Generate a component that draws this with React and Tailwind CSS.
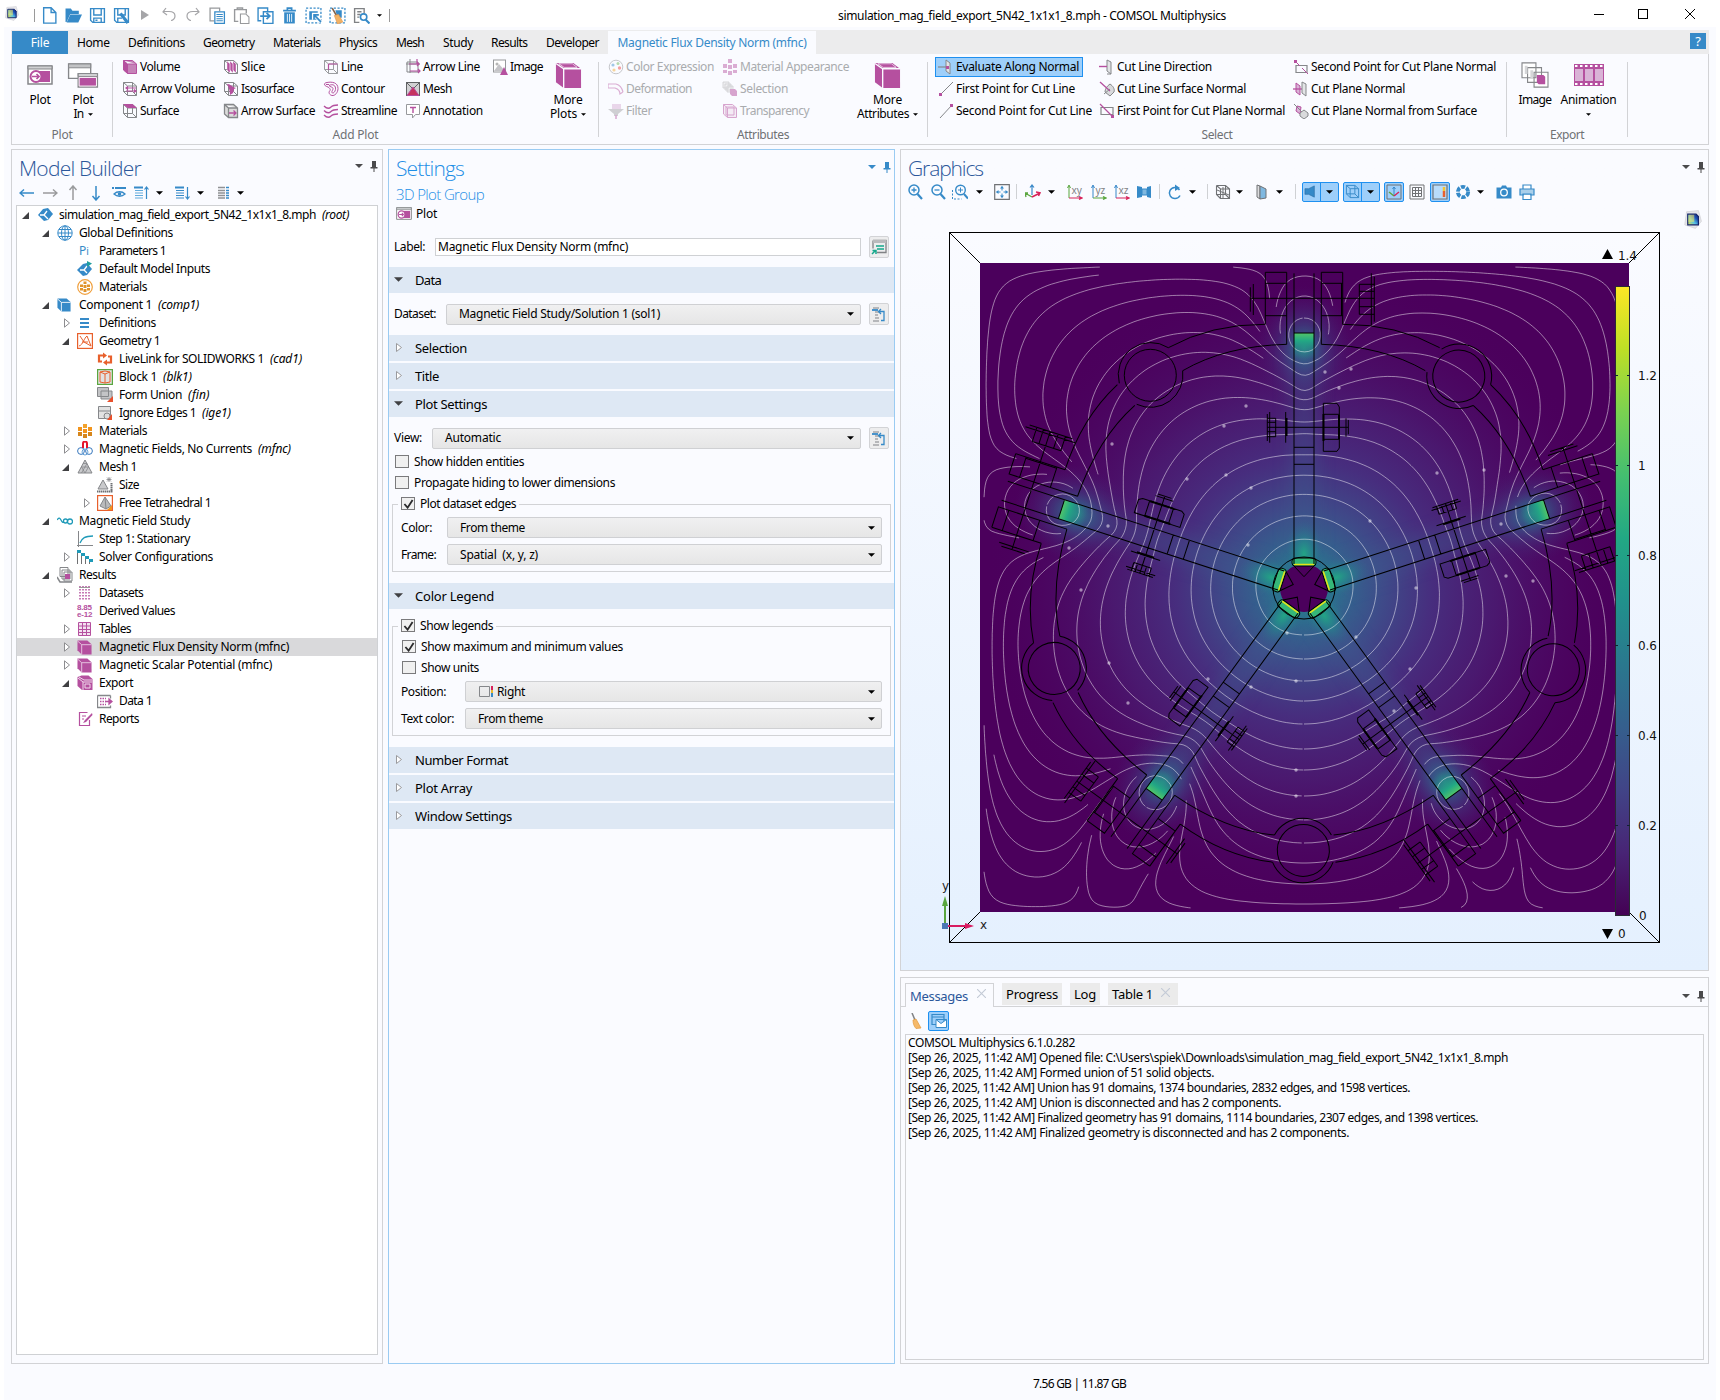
import React, { useLayoutEffect, useMemo, useRef } from "react";

const B = "#368ac8";
const P = "#b5509f";
const G = "#85878a";
const L = "#d9b3d6";

/* Text whose letter spacing is tuned so the run occupies `w` pixels. */
function T({ w, className = "", children }) {
  const ref = useRef(null);
  useLayoutEffect(() => {
    const el = ref.current;
    if (!w || !el) return;
    el.style.letterSpacing = "0px";
    const n = String(children).length;
    el.style.letterSpacing = (w - el.getBoundingClientRect().width) / n + "px";
  }, [w, children]);
  return (
    <span ref={ref} className={"inline-block whitespace-pre " + className}>
      {children}
    </span>
  );
}

function Svg({ s = "size-4", vb = "0 0 16 16", children, className = "" }) {
  return (
    <svg viewBox={vb} className={"shrink-0 " + s + " " + className} fill="none" stroke="none">
      {children}
    </svg>
  );
}

const Caret = ({ className = "fill-black", s = "w-[7px] h-[4px]" }) => (
  <svg viewBox="0 0 8 4" className={"shrink-0 " + s + " " + className}>
    <path d="M0 0h8L4 4z" />
  </svg>
);

const Logo = ({ s = "size-4" }) => (
  <Svg s={s}>
    <path d="M3 1.500l10-1 2.500 9-5 6-9-3z" fill="#e6e6ea" stroke="#cfcfd4" strokeWidth=".6" />
    <defs>
      <linearGradient id="lg" x1="0" y1="1" x2="1" y2="0">
        <stop offset="0" stopColor="#f5e63a" />
        <stop offset=".4" stopColor="#58c4e8" />
        <stop offset=".7" stopColor="#1d4fb5" />
        <stop offset="1" stopColor="#10256e" />
      </linearGradient>
    </defs>
    <path d="M4 3.500h7l2 2v7H4z" fill="url(#lg)" stroke="#14246b" strokeWidth="1" />
    <path d="M4.500 4h5v6h-5z" fill="#ffe95a" opacity=".55" />
  </Svg>
);

const cubeEdges = "M1.500 1.500h9l4 3.500v9.500h-9l-4-3.500zM1.500 1.500l4 3.500h9M5.500 5v9.500";
const wire = "M1.500 1.500h9l4 3.500M1.500 1.500v9l4 4M1.500 1.500l4 3.500h9v9.500h-9V5M10.500 1.500v9h-9M10.500 10.500l4 4";

const Cube = ({ c = P, edge = "#fafbff", s }) => (
  <Svg s={s}>
    <path d="M.500 .500h10.500l4.500 4V15.500H5L.500 11z" fill={c} />
    <path d="M.500 1l4.500 4h10.500M5 5v10.500" stroke={edge} strokeWidth="1" />
  </Svg>
);

/* ---------- icon set ---------- */
const icons = {
  volume: (
    <Svg>
      <path d={cubeEdges} fill="#c583b8" stroke={P} />
      <path d="M1.500 1.500l4 3.500v9.500l-4-3.500z" fill={P} />
    </Svg>
  ),
  arrowVolume: (
    <Svg>
      <path d={wire} stroke={G} />
      <path d="M4 7h10M4 10h10M6 5.500L4 7l2 1.500M12 8.500l2 1.500-2 1.500" stroke={P} strokeWidth="1.200" />
    </Svg>
  ),
  surface: (
    <Svg>
      <path d={wire} stroke={G} />
      <path d="M1 1h9.500l4.500 4H5.500z" fill={P} />
    </Svg>
  ),
  slice: (
    <Svg>
      <path d={wire} stroke={G} />
      <path d="M4 2l3 3v9l-3-3zM7 2l3 3v9l-3-3zM10 2l3 3v9l-3-3z" fill={P} stroke="#fff" strokeWidth=".4" />
    </Svg>
  ),
  iso: (
    <Svg>
      <path d={wire} stroke={G} />
      <path d="M4 3c3 0 5 2 6 3l3 1-2 1-1 4-3 2c0-4-1-7-3-11z" fill={P} />
    </Svg>
  ),
  arrowSurface: (
    <Svg>
      <path d={cubeEdges} stroke={G} strokeWidth="1.300" fill="#dcdcdc" />
      <path d="M6 10h7M10.500 7.500L13 10l-2.500 2.500" stroke={P} strokeWidth="1.300" />
    </Svg>
  ),
  line: (
    <Svg>
      <path d={wire} stroke="#9b9da0" />
      <path d="M5.500 5h9M5.500 5v6" stroke={P} strokeWidth="1.200" />
    </Svg>
  ),
  contour: (
    <Svg>
      <path d="M5 6C1 5 0 2 4 1.500c5-1 11 0 11 6 0 4-3 7.500-6 7-2.500-.500-4-3-2-5 1-1-1-3-2-3.500z" stroke={P} />
      <path d="M6 4.500c4-2 7 0 6.500 4-.500 3-3 4.500-3.500 3-.500-1.500 1-2 1-4C10 6 7 6 6 4.500zM3 3.500h3" stroke={P} />
    </Svg>
  ),
  stream: (
    <Svg>
      <path d="M1 3c3 3 5 3 7 1s4-2 7-2M1 7.500c3 3 5 3 7 1s4-2 7-2M1 12c3 3 5 3 7 1s4-2 7-2" stroke={P} strokeWidth="1.300" />
    </Svg>
  ),
  arrowLine: (
    <Svg>
      <path d="M2 3h11v10H2zM5 0v14M1 5h14" stroke={G} />
      <path d="M4 5h10M12 3l2 2-2 2M5 12h10M13 10l2 2-2 2M12 0v5" stroke={P} strokeWidth="1.200" />
    </Svg>
  ),
  mesh: (
    <Svg>
      <rect x="1.500" y="1.500" width="13" height="13" fill="#d0d0d2" stroke="#606264" />
      <path d="M2 2l6 6 6-6" stroke="#606264" />
      <path d="M8 6l6 8.500H2z" fill="#c5325f" stroke={P} />
    </Svg>
  ),
  annotation: (
    <Svg>
      <path d="M1.500 1.500h13v10h-4l-3 3.500v-3.500h-6z" stroke="#97999c" fill="#fff" />
      <path d="M5 4.500h6M8 4.500V10" stroke={P} strokeWidth="1.400" />
    </Svg>
  ),
  image: (
    <Svg>
      <rect x="1.500" y="1" width="12" height="12" stroke="#97999c" fill="#fff" />
      <circle cx="5" cy="5" r="1.500" fill="#b5b5b5" />
      <path d="M2 12l5-7 6 7z" fill="#c4c4c8" />
      <path d="M12 8l4 8H8z" fill={P} />
    </Svg>
  ),
  palette: (
    <Svg className="opacity-45">
      <circle cx="8" cy="8" r="6.800" stroke={G} />
      <circle cx="5" cy="6" r="1.600" fill={B} />
      <circle cx="10" cy="4.500" r="1.500" fill="#62b04b" />
      <circle cx="11.500" cy="9" r="1.700" fill="#e33" />
      <circle cx="6" cy="11" r="1.600" fill="#f5a623" />
    </Svg>
  ),
  deform: (
    <Svg className="opacity-45">
      <path d="M0 3h8c4 1 6 4 7 8M0 7h7c3 1 5 3 5 6l3-2M0 3v4" stroke={P} strokeWidth="1.200" />
    </Svg>
  ),
  filter: (
    <Svg className="opacity-50">
      <path d="M4 1h9v5H4z" fill={L} />
      <path d="M0 6h16l-6 5v2H6v-2z" fill="#a5a5a8" />
      <path d="M8 12v4" stroke={P} strokeWidth="1.500" />
    </Svg>
  ),
  matApp: (
    <Svg className="opacity-45">
      <path d="M6 0h4v4H6zM1 5h4v4H1zM6 6h4v4H6zM11 5h4v4h-4zM1 11h4v3H1zM6 12h4v4H6zM11 11h4v3h-4z" fill={P} />
    </Svg>
  ),
  selection: (
    <Svg className="opacity-50">
      <path d="M1 1h6v6H1zM3 3h6v6H3zM5 5h6v6H5z" fill="#e6e6e6" stroke="#a2a2a5" strokeWidth=".8" />
      <path d="M8 8h5l2 2v5h-5l-2-2z" fill={P} />
    </Svg>
  ),
  transp: (
    <Svg className="opacity-50">
      <path d={cubeEdges} stroke={P} fill="#efdcec" />
      <path d="M4 4h8v8H4z" stroke={P} />
    </Svg>
  ),
  evalNormal: (
    <Svg>
      <path d="M8 1l4 3v11l-4-3z" fill="#e2e4e6" stroke={G} />
      <path d="M0 8h9" stroke={G} strokeWidth="1.200" />
      <path d="M8 7h3v3H8z" fill={P} />
    </Svg>
  ),
  firstLine: (
    <Svg>
      <path d="M2 14L15 1" stroke={G} />
      <path d="M1 12h3v3H1z" fill={P} />
    </Svg>
  ),
  secondLine: (
    <Svg>
      <path d="M2 15L14 2" stroke={G} />
      <path d="M12 1h3v3h-3z" fill={P} />
    </Svg>
  ),
  lineDir: (
    <Svg>
      <path d="M8 1l4 2v12l-4-3z" fill="#e2e4e6" stroke={G} />
      <path d="M0 7.500h8" stroke={P} strokeWidth="1.400" />
      <path d="M8 15h4" stroke={G} />
    </Svg>
  ),
  lineSurf: (
    <Svg>
      <path d="M11 3c3 2 5 5 4 8l-4 4-5-4c0-3 2-6 5-8z" fill="#d9dadc" stroke={G} />
      <path d="M1 1l10 9" stroke={P} strokeWidth="1.300" />
      <path d="M5 13l6-5" stroke={G} />
    </Svg>
  ),
  planeFirst: (
    <Svg>
      <path d="M2 4.500h12v7H2z" stroke={G} strokeWidth="1.200" />
      <path d="M1 1l12 12" stroke={P} strokeWidth="1.200" />
      <path d="M12 12h3v3h-3z" fill={P} />
    </Svg>
  ),
  planeSecond: (
    <Svg>
      <path d="M3 6.500h11v7H3z" stroke={G} strokeWidth="1.200" />
      <path d="M2 2l5 5M9 9l6 6" stroke={P} strokeWidth="1" />
      <path d="M1 1h3v3H1z" fill={P} />
    </Svg>
  ),
  planeNormal: (
    <Svg>
      <path d="M3 2l4 3v9l-4-3z" fill={L} stroke={P} />
      <path d="M0 8h10" stroke={P} strokeWidth="1.300" />
      <path d="M9 1l4 2v12l-4-3z" fill="#e2e4e6" stroke={G} />
    </Svg>
  ),
  planeSurf: (
    <Svg>
      <path d="M4 3l4 1-1 7-4-3z" fill={L} stroke={P} />
      <path d="M1 1l10 10" stroke={G} />
      <path d="M11 7l4 3v3l-4 3-4-3v-3z" fill="#d9dadc" stroke={G} />
    </Svg>
  ),
};

/* ---------- title bar ---------- */
const qa = [
  <Svg key="n" s="size-[17px]"><path d="M2.500 .700h7l4.500 4.500v10H2.500zM9.500 .700v4.500H14" stroke={B} strokeWidth="1.300" fill="#fff" /></Svg>,
  <Svg key="o" s="size-[17px]"><path d="M.500 1.500h5l1.500 2h6v3H5L1.500 14h-1z" fill={B} /><path d="M5 7h11l-3.500 7.500H1.500z" fill={B} /></Svg>,
  <Svg key="s" s="size-[17px]"><path d="M1.500 1.500h13v13h-11l-2-2zM4.500 1.500v6h7v-6M4.500 14.500v-4h7v4M6 12.500h2" stroke={B} strokeWidth="1.300" /></Svg>,
  <Svg key="sa" s="size-[17px]"><path d="M1.500 1.500h13v13h-11l-2-2zM4.500 1.500v6h7v-6M4.500 14.500v-4h4" stroke={B} strokeWidth="1.300" /><path d="M7 6l7 9" stroke={B} strokeWidth="3" /></Svg>,
  <Svg key="p"><path d="M4 3l8 5-8 5z" fill="#a5a5a8" /></Svg>,
  <Svg key="u"><path d="M5 1L2 5l4 3M2 4.500h6c4 0 6 2 6 4.500s-2 4.500-4 4.500" stroke="#a5a5a8" strokeWidth="1.200" /></Svg>,
  <Svg key="r"><path d="M11 1l3 4-4 3M14 4.500H8c-4 0-6 2-6 4.500s2 4.500 4 4.500" stroke="#a5a5a8" strokeWidth="1.200" /></Svg>,
  <Svg key="c" s="size-[17px]"><path d="M5 13H1V1h9v3" stroke="#97999c" strokeWidth="1.200" /><path d="M5.500 4.500h9v11h-9z" stroke={B} strokeWidth="1.200" fill="#fff" /><path d="M7 7h6M7 9h6M7 11h6M7 13h6" stroke={B} /></Svg>,
  <Svg key="pa" s="size-[17px]"><path d="M5 13.500H1.500v-11h11V6M4 3V1h5v2" stroke="#97999c" strokeWidth="1.300" /><path d="M7 6.500h5l3 3v6H7z" stroke="#97999c" fill="#fff" /></Svg>,
  <Svg key="d" s="size-[17px]"><path d="M4 13H1V1h9v3M6 4.500h9v11H6z" stroke={B} strokeWidth="1.300" /><path d="M3 8.500h9M9 5.500l3 3-3 3" stroke={B} strokeWidth="1.700" /></Svg>,
  <Svg key="t" s="size-[17px]"><path d="M2 3.500h12M6 2.500V1h4v1.500" stroke={B} strokeWidth="1.600" /><path d="M3 5h10v10.500H3z" fill={B} /><path d="M6 6.500v7.500M8 6.500v7.500M10 6.500v7.500" stroke="#fff" strokeWidth=".8" /></Svg>,
  <Svg key="se" s="size-[17px]"><path d="M1 1h14v14H1z" stroke={B} strokeWidth="1.200" strokeDasharray="2 1.500" /><path d="M4 4h8v8H4z" fill={B} /><path d="M8 7l7 7M8 12V7h5" stroke="#fff" strokeWidth="3" /><path d="M8.500 7.500L15 14M8.500 12V7.500H13" stroke={B} strokeWidth="1.600" /></Svg>,
  <Svg key="cl" s="size-[17px]"><path d="M1 1h14v14H1z" stroke={B} strokeWidth="1.200" strokeDasharray="2 1.500" /><path d="M6 3h6v7H8z" fill={B} /><path d="M3 1l4 7" stroke="#83614a" strokeWidth="1.500" /><path d="M5 8l4-1 4 7-5 2z" fill="#f2b264" stroke="#e0944a" strokeWidth=".6" /></Svg>,
  <Svg key="f" s="size-[17px]"><path d="M6 14.500H1.500v-13h9V6M4 4.500h4M4 7h3M4 9.500h2" stroke="#808285" strokeWidth="1.300" /><circle cx="10" cy="9.500" r="3" stroke={B} strokeWidth="1.500" /><path d="M12 12l3.500 3.500" stroke={B} strokeWidth="2" /></Svg>,
];

function TitleBar() {
  return (
    <div className="flex h-[27px] shrink-0 items-center bg-white pt-[3px]">
      <div className="mb-[3px] w-[34px] pl-[4px]"><Logo s="size-[15px]" /></div>
      <div className="h-[13px] w-px bg-[#9a9a9a]" />
      <div className="ml-[2px] flex">
        {qa.map((i, k) => (
          <div key={k} className="flex w-6 items-center justify-center">{i}</div>
        ))}
      </div>
      <Caret s="w-[5px] h-[3px] ml-[4px]" />
      <div className="ml-[7px] h-[13px] w-px bg-[#9a9a9a]" />
      <T w={388} className="ml-[448px] pt-px">simulation_mag_field_export_5N42_1x1x1_8.mph - COMSOL Multiphysics</T>
      <svg viewBox="0 0 104 12" className="mb-[2px] ml-auto mr-[24px] h-3 w-[104px]" stroke="#000" fill="none">
        <path d="M2 6.500h10M46.500 1.500h9v9h-9z" shapeRendering="crispEdges" />
        <path d="M93 1l10 10M103 1L93 11" />
      </svg>
    </div>
  );
}

/* ---------- ribbon ---------- */
const tabs = [
  ["Home", 32.5, "pl-[9px] w-[60px]"],
  ["Definitions", 57, "w-[75px]"],
  ["Geometry", 51.5, "w-[70px]"],
  ["Materials", 47.5, "w-[66px]"],
  ["Physics", 38.5, "w-[57px]"],
  ["Mesh", 28, "w-[47px]"],
  ["Study", 30, "w-[48px]"],
  ["Results", 36.5, "w-[55px]"],
  ["Developer", 53, "w-[62px]"],
];

function TabBar() {
  return (
    <div className="flex h-6 shrink-0 items-center bg-[#ececed]">
      <div className="ml-px flex h-[23px] w-14 items-center justify-center self-end bg-[#368ac8] text-white"><T w={18.5}>File</T></div>
      {tabs.map(([t, w, c]) => (
        <div key={t} className={"pt-[2px] " + c}><T w={w}>{t}</T></div>
      ))}
      <div className="flex h-[23px] w-[208px] items-center justify-center self-end bg-[#fafbff] text-[#368ac8]">
        <T w={189}>Magnetic Flux Density Norm (mfnc)</T>
      </div>
      <div className="ml-auto mr-[3px] mt-[3px] flex size-4 items-center justify-center self-start bg-[#368ac8] text-[13px] text-white">?</div>
    </div>
  );
}

function RCol({ c, items, dim }) {
  return (
    <div className={"flex flex-col gap-[2px] " + c}>
      {items.map(([icon, text, w, on]) => (
        <div
          key={text}
          className={
            "flex h-5 items-center gap-[2px] whitespace-nowrap border pl-[2px] " +
            (on ? "w-[148px] border-[#1e90f0] bg-[#9ecffa]" : "border-transparent") +
            (dim ? " text-[#a9abae]" : "")
          }
        >
          {icons[icon]}
          <T w={w}>{text}</T>
        </div>
      ))}
    </div>
  );
}

function Big({ c, icon, a, wa, b, wb }) {
  return (
    <div className={"flex flex-col items-center " + c}>
      <div className="flex h-9 items-center justify-center">{icon}</div>
      <T w={wa} className="leading-[14px]">{a}</T>
      {b !== undefined && (
        <div className="flex items-center gap-1 leading-[14px]">
          {b && <T w={wb}>{b}</T>}
          <Caret s={b ? "w-[5px] h-[3px]" : "w-[5px] h-[3px] mt-[6px]"} />
        </div>
      )}
    </div>
  );
}

const Group = ({ c, label, lw, children }) => (
  <div className={"flex flex-col " + c}>
    <div className="flex h-[73px] pt-[3px]">{children}</div>
    <div className="text-center leading-[16px] text-[#6f7174]"><T w={lw}>{label}</T></div>
  </div>
);
const Sep = () => <div className="mt-2 h-[75px] w-px shrink-0 bg-[#d2d3d6]" />;

const PlotIcon = ({ s = "size-6" }) => (
  <svg viewBox="0 0 26 20" className={s} preserveAspectRatio="none">
    <path d="M1 1h24v18H1z" fill="#fff" stroke={G} strokeWidth="1.500" />
    <path d="M1 1h24v3H1z" fill="#cfd0d2" stroke={G} />
    <path d="M12 6h11v11H12z" fill={P} />
    <circle cx="9" cy="11.500" r="5.500" fill="#fff" stroke={P} strokeWidth="2" />
    <path d="M5 11.500h7M9.500 9l2.500 2.500L9.500 14" stroke={P} strokeWidth="1.700" fill="none" />
  </svg>
);

const BigCube = () => (
  <svg viewBox="0 0 26 28" className="h-[27px] w-[27px]">
    <path d="M0 1h18l8 6v20H8L0 21z" fill={P} />
    <path d="M0 1.500L8 7h18M8 7v20" stroke="#fafbff" strokeWidth="1.400" fill="none" />
    <path d="M3 1.800h14l5 3.800H8.500z" fill={P} stroke="#fafbff" strokeWidth=".7" />
  </svg>
);

function Ribbon() {
  return (
    <div className="flex h-[91px] shrink-0 border border-t-0 border-[#d2d3d6]">
      <Group c="w-[100px]" label="Plot" lw={21}>
        <Big c="w-[42px] ml-[7px]" icon={<PlotIcon s="w-[26px] h-[20px]" />} a="Plot" wa={21} />
        <Big
          c="w-[44px]"
          a="Plot"
          wa={21}
          b="In"
          wb={10}
          icon={
            <svg viewBox="0 0 32 26" className="h-[25px] w-8">
              <path d="M1 1h23v15H1z" fill="#fff" stroke={G} strokeWidth="1.400" />
              <path d="M1 1h23v4H1z" fill="#c2c3c5" stroke={G} />
              <path d="M11 11h20v14H11z" fill={P} stroke={G} strokeWidth="1.400" />
              <path d="M11 11h20v3H11z" fill="#d5d6d8" stroke={G} />
              <path d="M12 15h18v9H12z" stroke="#fff" fill="none" />
            </svg>
          }
        />
      </Group>
      <Sep />
      <Group c="w-[485px]" label="Add Plot" lw={46}>
        <RCol c="ml-[6px] w-[101px]" items={[["volume", "Volume", 40], ["arrowVolume", "Arrow Volume", 75], ["surface", "Surface", 39]]} />
        <RCol c="w-[100px]" items={[["slice", "Slice", 24], ["iso", "Isosurface", 53], ["arrowSurface", "Arrow Surface", 74]]} />
        <RCol c="w-[82px]" items={[["line", "Line", 22], ["contour", "Contour", 44], ["stream", "Streamline", 56]]} />
        <RCol c="w-[87px]" items={[["arrowLine", "Arrow Line", 57], ["mesh", "Mesh", 29], ["annotation", "Annotation", 60]]} />
        <RCol c="w-[53px]" items={[["image", "Image", 33]]} />
        <Big c="w-[52px]" icon={<BigCube />} a="More" wa={29} b="Plots" wb={27} />
      </Group>
      <Sep />
      <Group c="w-[328px]" label="Attributes" lw={52}>
        <RCol dim c="ml-[6px] w-[114px]" items={[["palette", "Color Expression", 88], ["deform", "Deformation", 66], ["filter", "Filter", 26]]} />
        <RCol dim c="w-[133px]" items={[["matApp", "Material Appearance", 109], ["selection", "Selection", 48], ["transp", "Transparency", 69]]} />
        <Big c="w-[71px]" icon={<BigCube />} a="More" wa={29} b="Attributes" wb={52} />
      </Group>
      <Sep />
      <Group c="w-[578px]" label="Select" lw={31}>
        <RCol c="ml-[7px] w-[161px]" items={[["evalNormal", "Evaluate Along Normal", 123, true], ["firstLine", "First Point for Cut Line", 119], ["secondLine", "Second Point for Cut Line", 136]]} />
        <RCol c="w-[194px]" items={[["lineDir", "Cut Line Direction", 95], ["lineSurf", "Cut Line Surface Normal", 129], ["planeFirst", "First Point for Cut Plane Normal", 168]]} />
        <RCol c="w-[210px]" items={[["planeSecond", "Second Point for Cut Plane Normal", 185], ["planeNormal", "Cut Plane Normal", 94], ["planeSurf", "Cut Plane Normal from Surface", 166]]} />
      </Group>
      <Sep />
      <Group c="w-[120px]" label="Export" lw={34}>
        <Big
          c="w-[46px] ml-[5px]"
          a="Image"
          wa={33}
          icon={
            <svg viewBox="0 0 30 28" className="h-[26px] w-[30px]" strokeWidth="1.200">
              <path d="M1 1h15v16H1zM7 6h15v16H7zM14 11h15v16H14z" fill="#fff" stroke={G} />
              <path d="M4 4h3v9H4zM10 9h3v9h-3z" fill="#d5d6d8" />
              <path d="M17 14h7l2 2v8h-7l-2-2z" fill={P} />
            </svg>
          }
        />
        <Big
          c="w-[61px]"
          a="Animation"
          wa={56}
          b=""
          icon={
            <svg viewBox="0 0 30 22" className="h-[22px] w-[30px]">
              <path d="M0 0h30v22H0z" fill={P} />
              <path d="M1 5h8v12H1zM11 5h8v12h-8zM21 5h8v12h-8z" fill={L} />
              <path d="M1 2h28M1 20h28" stroke="#fff" strokeWidth="2" strokeDasharray="2.500 2.500" />
            </svg>
          }
        />
      </Group>
      <Sep />
    </div>
  );
}

/* ---------- panels ---------- */
const Pin = ({ c = "#4a4a4c" }) => (
  <svg viewBox="0 0 8 11" className="h-[11px] w-2"><path d="M2 0h4v6h1.500v1.500h-3V11h-1V7.500h-3V6H2z" fill={c} /></svg>
);

const treeIcons = {
  root: <Svg><path d="M6 2l5-1 5 6-5 6-4 1-6-6z" fill={B} /><path d="M3 8h4l4 4M7 8l3-4" stroke="#fff" strokeWidth="1.300" /></Svg>,
  globe: <Svg><circle cx="8" cy="8" r="7.200" stroke={B} /><ellipse cx="8" cy="8" rx="3.500" ry="7.200" stroke={B} /><path d="M8 1v14M1 8h14M2 4.500h12M2 11.500h12" stroke={B} /></Svg>,
  inputs: <Svg><path d="M6 3l4-1 5 6-5 6-4 1-6-6z" fill={B} /><path d="M3 9h4l3 3M7 9l3-4" stroke="#fff" strokeWidth="1.300" /><path d="M10 0l5 2.500L10 6z" fill="#1f9e9e" /></Svg>,
  matRound: <Svg><circle cx="8" cy="8" r="7.300" stroke="#f09f3c" strokeWidth="1.200" fill="#fff" /><path d="M6.500 2.500h3V5h-3zM3 5.500h3V8H3zM6.500 6h3v3h-3zM10 5.500h3V8h-3zM3 9h3v2.500H3zM6.500 10h3v3h-3zM10 9h3v2.500h-3z" fill="#e0942c" /></Svg>,
  comp: <Cube c={B} edge="#fff" s="size-[14px]" />,
  defs: <Svg><path d="M3 4h9M3 8h9M3 12h9" stroke={B} strokeWidth="2" /></Svg>,
  geom: <Svg><rect x=".600" y=".600" width="14.800" height="14.800" stroke="#e8602c" strokeWidth="1.200" /><path d="M2 13c4-1 5-8 8-10l4 10M3 3l4 6 7 4M5 9h6" stroke="#e8602c" /></Svg>,
  live: <Svg><path d="M7 4.500H2v6h3M9 11.500h5v-6h-3" stroke="#e8602c" strokeWidth="2.200" /><path d="M6 1.500l4 3-4 3zM10 8.500l-4 3 4 3z" fill="#e8602c" /></Svg>,
  block: <Svg><rect x=".600" y=".600" width="14.800" height="14.800" stroke="#5aa63f" strokeWidth="1.200" fill="#e2e2e2" /><path d="M3 3l5 2 5-2-5-1zM8 5v9M3 3v10l5 1 5-1V3" stroke="#e8602c" /></Svg>,
  union: <Svg><path d="M.500 .500h11v9H.500zM4 4h11v8H4z" fill="#c3c4c6" stroke={G} /><path d="M16 9v6h-6z" fill="#e8502c" /></Svg>,
  ignore: <Svg><path d="M1.500 1.500h12v12h-12zM1.500 6h12" fill="#e2e2e2" stroke={G} /><circle cx="10" cy="11" r="3" fill="#ddd" stroke={G} /><path d="M15 9v6h-5z" fill="#e8502c" /></Svg>,
  mats: <Svg><path d="M6 1h4v4H6z" fill="#f2a22c" /><path d="M1 4h4v4H1zM6 6h4v4H6zM11 4h4v4h-4z" fill="#f2941c" /><path d="M1 9h4v4H1zM6 11h4v4H6zM11 9h4v4h-4z" fill="#d6861c" /></Svg>,
  magn: <Svg><circle cx="4" cy="10" r="3.400" stroke="#3777bd" /><circle cx="12" cy="10" r="3.400" stroke="#3777bd" /><circle cx="8" cy="11" r="3" stroke="#68a3d8" /><path d="M6 7V2.500a2 2 0 014 0V7" stroke="#e6152a" strokeWidth="2" /></Svg>,
  mesh: <Svg><path d="M8 1l7 13H1z" fill="#c9cacc" stroke={G} /><path d="M4.500 8h7L8 14zM6 4.500h4L4.500 14" stroke={G} strokeWidth=".8" /></Svg>,
  size: <Svg><path d="M6 3l5 9H1z" fill="#c9cacc" stroke={G} /><path d="M0 14.500h16M14.500 6v8" stroke="#6d6f72" strokeWidth="2" strokeDasharray="1.500 .500" /><path d="M12 0v5M9.500 2.500h5M10 .500l4 4M14 .500l-4 4" stroke={G} strokeWidth=".8" /></Svg>,
  tetra: <Svg><rect x=".600" y=".600" width="14.800" height="14.800" stroke="#e8602c" strokeWidth="1.200" fill="#fff" /><path d="M8 2l6 9-5 3-6-3z" fill="#b9babc" stroke={G} /><path d="M8 2l1 12" stroke={G} /><path d="M15 10v5h-5z" fill="#f2941c" /></Svg>,
  study: <Svg><path d="M0 7c2-3 3-2 4 0s2 3 3 2" stroke="#1f9ab8" strokeWidth="1.300" /><circle cx="8.500" cy="8" r="2" stroke="#1f9ab8" strokeWidth="1.300" /><circle cx="13" cy="8.500" r="2.500" stroke="#1f9ab8" strokeWidth="1.300" /></Svg>,
  step: <Svg><path d="M1.500 0v16M0 14.500h16" stroke={G} /><path d="M3 12c2-5 5-7 13-7" stroke="#1f9ab8" strokeWidth="1.300" /></Svg>,
  solver: <Svg><path d="M.500 1v14M4.500 4v11M8.500 7v8M12.500 10v5" stroke="#6f7072" /><path d="M0 1h4v3H0zM4 4h4v3H4zM8 7h4v3H8zM12 10h4v3h-4z" fill="#1f9ab8" /></Svg>,
  results: <Svg><path d="M3 .500h8v9H3zM5 3h8v9H5zM7 5h8v9H7z" fill="#fff" stroke={G} /><path d="M8 7h5v5H8z" fill={P} /><path d="M0 10l3 5h12" stroke={G} strokeWidth="1.500" /></Svg>,
  datasets: <Svg><path d="M3 1v14M6 1v14M9 1v14M12 1v14" stroke={P} strokeWidth="1.500" strokeDasharray="1.500 1.500" /><path d="M2 2.500h11" stroke="#999" /></Svg>,
  derived: (
    <span className="flex w-4 flex-col font-['Liberation_Sans'] text-[8px] font-bold leading-[7px] tracking-[-0.2px] text-[#b5509f]">
      <span>8.85</span><span>e-12</span>
    </span>
  ),
  tables: <Svg><path d="M1.500 1.500h12v13h-12z" fill="#f3e2f0" stroke={P} /><path d="M1.500 5h12M1.500 8.500h12M1.500 11.500h12M5.500 1.500v13M9.500 1.500v13" stroke={P} /></Svg>,
  cube: <Cube s="size-[15px]" edge="#e8c6e2" />,
  exp: <Svg><path d="M.500 2l4-1.500h7l4 3.500v11H5L.500 11z" fill={P} /><path d="M1 3l5 4h9M6 7v8M2 2l5 3h8M8 9h5v4H8z" stroke="#f0d9ec" /></Svg>,
  data: <Svg><path d="M.500 2.500h13M.500 2.500v12h13v-2M13.500 2.500v3" stroke={G} strokeWidth="1.300" /><path d="M3 5.500h6M3 8.500h6M3 11.500h6" stroke={P} strokeWidth="1.500" strokeDasharray="1.500 1" /><path d="M8 8.500h6M12 6l3 2.500-3 2.500z" stroke={P} fill={P} strokeWidth="1.300" /></Svg>,
  reports: <Svg><path d="M12.500 9v5.500h-10v-13h8" stroke={P} strokeWidth="1.200" /><path d="M5 5h4M5 8h2" stroke={P} /><path d="M15 2L8 9l-2 3 3-1 6.500-7z" fill={P} /></Svg>,
  param: <span className="w-4 pl-[2px] text-[12px] text-[#368ac8]">P<span className="text-[10px]">i</span></span>,
};

const tree = [
  [0, "o", "root", "simulation_mag_field_export_5N42_1x1x1_8.mph", 257, "(root)", 27],
  [1, "o", "globe", "Global Definitions", 94],
  [2, "", "param", "Parameters 1", 67],
  [2, "", "inputs", "Default Model Inputs", 111],
  [2, "", "matRound", "Materials", 48],
  [1, "o", "comp", "Component 1", 73, "(comp1)", 41],
  [2, "c", "defs", "Definitions", 57],
  [2, "o", "geom", "Geometry 1", 61],
  [3, "", "live", "LiveLink for SOLIDWORKS 1", 145, "(cad1)", 32],
  [3, "", "block", "Block 1", 38, "(blk1)", 29],
  [3, "", "union", "Form Union", 63, "(fin)", 21],
  [3, "", "ignore", "Ignore Edges 1", 77, "(ige1)", 29],
  [2, "c", "mats", "Materials", 48],
  [2, "c", "magn", "Magnetic Fields, No Currents", 153, "(mfnc)", 33],
  [2, "o", "mesh", "Mesh 1", 38],
  [3, "", "size", "Size", 20],
  [3, "c", "tetra", "Free Tetrahedral 1", 92],
  [1, "o", "study", "Magnetic Field Study", 111],
  [2, "", "step", "Step 1: Stationary", 91],
  [2, "c", "solver", "Solver Configurations", 114],
  [1, "o", "results", "Results", 37],
  [2, "c", "datasets", "Datasets", 44],
  [2, "", "derived", "Derived Values", 76],
  [2, "c", "tables", "Tables", 32],
  [2, "c", "cube", "Magnetic Flux Density Norm (mfnc)", 190],
  [2, "c", "cube", "Magnetic Scalar Potential (mfnc)", 173],
  [2, "o", "exp", "Export", 34],
  [3, "", "data", "Data 1", 33],
  [2, "", "reports", "Reports", 40],
];
const indent = ["pl-[5px]", "pl-[25px]", "pl-[45px]", "pl-[65px]"];

function ModelBuilder() {
  const dk = "#9a9b9d";
  return (
    <div className="flex w-[372px] flex-col border border-[#d2d3d6] px-[4px]">
      <div className="flex h-[32px] items-center pl-[3px] pt-[4px] text-[21px] font-light text-[#2b579a]">
        <T w={122} className="font-['Open_Sans']">Model Builder</T>
        <div className="mb-[4px] ml-auto flex items-center gap-[7px]"><Caret className="fill-[#4a4a4c]" s="w-[8px] h-[4px]" /><Pin /></div>
      </div>
      <div className="mb-[2px] flex h-[21px] items-center pl-[3px]">
        <Svg><path d="M1 8h14M5 4.500L1 8l4 3.500" stroke={B} strokeWidth="1.500" /></Svg>
        <Svg className="ml-[7px]"><path d="M1 8h14M11 4.500L15 8l-4 3.500" stroke={dk} strokeWidth="1.500" /></Svg>
        <Svg className="ml-[7px]"><path d="M8 1v14M4.500 5L8 1l3.500 4" stroke={dk} strokeWidth="1.500" /></Svg>
        <Svg className="ml-[7px]"><path d="M8 1v14M4.500 11L8 15l3.500-4" stroke={B} strokeWidth="1.500" /></Svg>
        <Svg className="ml-[7px]"><path d="M1 3h2M4 3h11" stroke={B} strokeWidth="2" /><path d="M3 9c3-3 8-3 11 0-3 3-8 3-11 0z" stroke={B} strokeWidth="1.300" /><circle cx="8.500" cy="9" r="1.800" fill={B} /></Svg>
        <Svg className="ml-[6px]"><path d="M1 2.500h9" stroke={B} strokeWidth="2" /><path d="M2 5.500h8M2 8h8M2 10.500h8M2 13h8" stroke="#62abdc" strokeWidth="1" /><path d="M13.500 14V2M11.500 4.500l2-2.500 2 2.500" stroke={B} strokeWidth="1.200" /></Svg>
        <Caret className="ml-[7px]" />
        <Svg className="ml-[11px]"><path d="M1 2.500h9" stroke={B} strokeWidth="2" /><path d="M2 5.500h8M2 8h8M2 10.500h8M2 13h8" stroke={B} strokeWidth="1.200" /><path d="M13.500 2v12M11.500 11.500l2 2.500 2-2.500" stroke={B} strokeWidth="1.200" /></Svg>
        <Caret className="ml-[7px]" />
        <Svg className="ml-[12px]"><path d="M2 2.500h7M2 5.500h7M2 8h7M2 10.500h7M2 13h7" stroke="#8f9194" strokeWidth="1.300" /><path d="M10 2.500h3M10 5.500h3M10 8h3M10 10.500h3M10 13h3" stroke={B} strokeWidth="1.300" /></Svg>
        <Caret className="ml-[5px]" />
      </div>
      <div className="mb-[8px] flex-1 border border-[#cfd1d4] bg-white">
        {tree.map(([lv, st, ic, t, w, tag, tw], i) => (
          <div key={i} className={"flex h-[18px] items-center whitespace-nowrap " + indent[lv] + (i === 24 ? " bg-[#d9d9db]" : "")}>
            <div className="flex w-[15px] shrink-0">
              {st === "o" && <svg viewBox="0 0 7 7" className="size-[7px]"><path d="M7 0v7H0z" fill="#404042" /></svg>}
              {st === "c" && <svg viewBox="0 0 6 10" className="ml-[2px] h-[10px] w-[6px]"><path d="M.500 .800v8.400L5.500 5z" fill="#fff" stroke="#8d8d90" /></svg>}
            </div>
            <div className="flex w-[22px] shrink-0 items-center">{treeIcons[ic]}</div>
            <T w={w}>{t}</T>
            {tag && <T w={tw} className="ml-[6px] italic">{tag}</T>}
          </div>
        ))}
      </div>
    </div>
  );
}

/* ---------- settings ---------- */
const Section = ({ open, children, w }) => (
  <div className="flex h-[26px] items-center bg-[#dee8f4] pl-[5px] text-[13px]">
    <div className="w-[21px]">
      {open ? (
        <Caret className="mb-[2px] fill-[#404042]" s="w-[9px] h-[5px]" />
      ) : (
        <svg viewBox="0 0 6 9" className="mb-[2px] ml-[2px] h-[9px] w-[6px]"><path d="M.500 .500v8L5.500 4.500z" fill="#fff" stroke="#9a9a9d" /></svg>
      )}
    </div>
    <T w={w}>{children}</T>
  </div>
);
const Select = ({ className = "", children }) => (
  <div className={"flex h-[21px] flex-1 items-center rounded-[2px] border border-[#cfd0d3] bg-gradient-to-b from-[#f0f0f1] to-[#e6e6e6] pl-3 pr-[6px] " + className}>
    {children}
    <Caret className="ml-auto" />
  </div>
);
const SqBtn = ({ children }) => (
  <div className="ml-2 flex h-[22px] w-5 items-center justify-center rounded-[2px] border border-[#d2d3d6] bg-[#ededee]">{children}</div>
);
const GoIcon = () => (
  <Svg><path d="M2 2h6M4 6h4M4 9h3M4 12h4M2 15h6" stroke="#808285" strokeWidth="1.200" /><path d="M1 4h6" stroke={B} strokeWidth="1.800" /><path d="M8 5.500h5v9h-3M10 3L7.500 5.500 10 8" stroke={B} strokeWidth="1.300" /></Svg>
);
const Check = ({ on, children, w, className }) => (
  <div className={"flex h-[21px] items-center " + className}>
    <div className="mr-[5px] flex h-[13px] w-[14px] items-center justify-center border border-[#7a7a7c] bg-[#f0f0f0]">
      {on && <svg viewBox="0 0 12 11" className="h-[10px] w-[11px]"><path d="M1.500 5.500L5 9.500 10.500 1" stroke="#2a2a2c" strokeWidth="2" fill="none" /></svg>}
    </div>
    <T w={w}>{children}</T>
  </div>
);

function Settings() {
  return (
    <div className="flex w-[507px] flex-col border border-[#9acbf2]">
      <div className="flex h-[33px] items-center pl-[7px] pt-[3px] font-['Open_Sans'] text-[21px] font-light text-[#1e8ee6]">
        <T w={68}>Settings</T>
        <div className="mb-[2px] ml-auto mr-[3px] flex items-center gap-[7px]"><Caret className="fill-[#368ac8]" s="w-[8px] h-[4px]" /><Pin c={B} /></div>
      </div>
      <div className="flex h-[21px] items-center pl-[7px] font-['Open_Sans'] text-[15px] font-light text-[#1e8ee6]"><T w={88}>3D Plot Group</T></div>
      <div className="flex h-[19px] items-center gap-1 pl-[7px]"><PlotIcon s="w-4 h-[13px]" /><T w={21}>Plot</T></div>
      <div className="mt-[13px] flex h-[22px] items-center pl-[5px] pr-[5px]">
        <T w={31} className="mr-[10px]">Label:</T>
        <div className="flex h-[18px] flex-1 items-center border border-[#cfd1d4] bg-white pl-[2px]"><T w={190}>Magnetic Flux Density Norm (mfnc)</T></div>
        <SqBtn>
          <Svg><path d="M2 1.500h13v12H6M2 1.500v8" stroke="#808285" strokeWidth="1.300" fill="none" /><path d="M2 1h13v3H2z" fill="#b9babc" /><path d="M5 7h8M6 10h7" stroke="#16a88c" strokeWidth="1.300" /><path d="M1 15l3-3M1.500 11.500H5V15" stroke="#16a88c" strokeWidth="1.500" /></Svg>
        </SqBtn>
      </div>
      <div className="mt-[9px]"><Section open w={26}>Data</Section></div>
      <div className="flex h-[42px] items-center pl-[5px] pr-[5px]">
        <T w={42} className="mr-[10px]">Dataset:</T>
        <Select><T w={201}>Magnetic Field Study/Solution 1 (sol1)</T></Select>
        <SqBtn><GoIcon /></SqBtn>
      </div>
      <div className="flex flex-col gap-[2px]">
        <Section w={52}>Selection</Section>
        <Section w={24}>Title</Section>
        <Section open w={72}>Plot Settings</Section>
      </div>
      <div className="mt-[9px] flex h-[24px] items-center pl-[5px] pr-[5px]">
        <T w={28} className="mr-[10px]">View:</T>
        <Select><T w={56}>Automatic</T></Select>
        <SqBtn><GoIcon /></SqBtn>
      </div>
      <Check className="mt-px pl-[6px]" w={110}>Show hidden entities</Check>
      <Check className="pl-[6px]" w={201}>Propagate hiding to lower dimensions</Check>
      <div className="relative mx-[3px] mt-[11px] h-[68px] border border-[#d2d3d6] pt-[12px]">
        <Check on className="absolute -top-[12px] left-[5px] bg-[#fafbff] px-[3px]" w={96}>Plot dataset edges</Check>
        <div className="flex items-center pl-[8px] pr-[8px]">
          <T w={31}>Color:</T>
          <Select className="ml-[15px]"><T w={65}>From theme</T></Select>
        </div>
        <div className="mt-[6px] flex items-center pl-[8px] pr-[8px]">
          <T w={35}>Frame:</T>
          <Select className="ml-[11px]"><T w={78}>Spatial  (x, y, z)</T></Select>
        </div>
      </div>
      <div className="mt-[11px]"><Section open w={79}>Color Legend</Section></div>
      <div className="relative mx-[3px] mt-[17px] h-[110px] border border-[#d2d3d6] pt-[9px]">
        <Check on className="absolute -top-[12px] left-[5px] bg-[#fafbff] px-[3px]" w={73}>Show legends</Check>
        <Check on className="pl-[9px]" w={202}>Show maximum and minimum values</Check>
        <Check className="pl-[9px]" w={58}>Show units</Check>
        <div className="mt-[3px] flex items-center pl-[8px] pr-[8px]">
          <T w={45}>Position:</T>
          <Select className="ml-[19px]">
            <Svg><path d="M1.500 2.500h10v10h-10z" stroke={G} /><path d="M14 2v4" stroke="#d8235a" strokeWidth="2" /><path d="M14 6v3" stroke="#e8b82c" strokeWidth="2" /><path d="M14 9v4" stroke={B} strokeWidth="2" /></Svg>
            <T w={28} className="ml-[3px]">Right</T>
          </Select>
        </div>
        <div className="mt-[6px] flex items-center pl-[8px] pr-[8px]">
          <T w={53}>Text color:</T>
          <Select className="ml-[11px]"><T w={65}>From theme</T></Select>
        </div>
      </div>
      <div className="mt-[11px] flex flex-col gap-[2px]">
        <Section w={93}>Number Format</Section>
        <Section w={57}>Plot Array</Section>
        <Section w={97}>Window Settings</Section>
      </div>
    </div>
  );
}

/* ---------- plot ---------- */
const X0 = 980, Y0 = 263, W = 649, CX = 1304, CY = 588;
const angles = [0, -72, 72, 144, -144];
const rot = (x, y, a) => {
  const t = (a * Math.PI) / 180;
  return [CX + x * Math.cos(t) - y * Math.sin(t), CY + x * Math.sin(t) + y * Math.cos(t)];
};

/* Radius along an arm and the radius between arms that shares its potential. */
const dent = [[0, 0], [40, 39], [75, 72], [96, 93], [115, 113], [133, 136], [155, 161], [166, 182], [178, 208], [188, 232], [196, 255], [206, 275], [215, 296], [225, 316], [231, 324]];
const dentAt = (r) => {
  let i = 1;
  while (i < dent.length - 1 && dent[i][0] < r) i++;
  const [a, b] = dent[i - 1], [c, d] = dent[i];
  return b + ((r - a) / (c - a)) * (d - b);
};

/* Relaxes the potential of the centre ring and the five arms in a grounded box. */
function potential(n, h) {
  const f = new Float64Array(n * n), q = new Float64Array(n * n);
  const cell = (x, y) => Math.round((y - Y0) / h) * n + Math.round((x - X0) / h);
  const at = (x, y) => {
    const gx = (x - X0) / h, gy = (y - Y0) / h, i = Math.floor(gx), j = Math.floor(gy), u = gx - i, v = gy - j, k = j * n + i;
    return (f[k] * (1 - u) + f[k + 1] * u) * (1 - v) + (f[k + n] * (1 - u) + f[k + n + 1] * u) * v;
  };
  const pins = new Map();
  angles.forEach((a) => {
    q[cell(...rot(0, -25, a))] += 1;
    const t = (a * Math.PI) / 180;
    for (let r = 130; r <= 254; r += 2)
      for (let s = -5; s <= 5; s += 2.5) {
        if (r > 229 && r < 243) continue;
        const k = cell(...rot(s, -r, a));
        const px = X0 + (k % n) * h - CX, py = Y0 + Math.floor(k / n) * h - CY;
        pins.set(k, px * Math.sin(t) - py * Math.cos(t));
      }
  });
  const free = [];
  for (let j = 1; j < n - 1; j++) for (let i = 1; i < n - 1; i++) if (!pins.has(j * n + i)) free.push(j * n + i);
  for (let it = 0; it < 900; it++) {
    for (const k of free) f[k] += 1.9 * ((f[k - 1] + f[k + 1] + f[k - n] + f[k + n] + q[k]) / 4 - f[k]);
    const ref = at(CX, CY + 275);
    pins.forEach((r, k) => {
      const v = r > 236 ? -ref * 1.9 : at(CX, CY + Math.min(323.5, dentAt(r)));
      f[k] += 0.5 * (v - f[k]);
    });
  }
  return f;
}

/* Evenly spaced streamlines that run along the level sets of the potential. */
function streamlines() {
  const n = 163, h = W / (n - 1);
  let f = potential(n, h);
  for (let s = 0; s < 3; s++) {
    const g = f.slice();
    for (let j = 1; j < n - 1; j++)
      for (let i = 1; i < n - 1; i++) {
        const k = j * n + i;
        g[k] = 0.5 * f[k] + 0.125 * (f[k - 1] + f[k + 1] + f[k - n] + f[k + n]);
      }
    f = g;
  }
  const gx = new Float64Array(n * n), gy = new Float64Array(n * n);
  for (let j = 0; j < n; j++)
    for (let i = 0; i < n; i++) {
      const k = j * n + i;
      gx[k] = f[j * n + Math.min(n - 1, i + 1)] - f[j * n + Math.max(0, i - 1)];
      gy[k] = f[Math.min(n - 1, j + 1) * n + i] - f[Math.max(0, j - 1) * n + i];
    }
  const dir = (x, y) => {
    const a = (x - X0) / h, b = (y - Y0) / h, i = Math.floor(a), j = Math.floor(b);
    if (i < 0 || j < 0 || i >= n - 1 || j >= n - 1) return null;
    const u = a - i, v = b - j, k = j * n + i;
    const mix = (g) => (g[k] * (1 - u) + g[k + 1] * u) * (1 - v) + (g[k + n] * (1 - u) + g[k + n + 1] * u) * v;
    const p = mix(gx), q = mix(gy), m = Math.hypot(p, q);
    return m < 1e-9 ? null : [-q / m, p / m];
  };
  const SEP = 23, STOP = 8, CELL = 24, gw = Math.ceil(W / CELL) + 1;
  const hash = Array.from({ length: gw * gw }, () => []);
  const slot = (x, y) => [Math.floor((x - X0) / CELL), Math.floor((y - Y0) / CELL)];
  const near = (x, y, d) => {
    const [i, j] = slot(x, y);
    for (let b = Math.max(0, j - 1); b <= Math.min(gw - 1, j + 1); b++)
      for (let a = Math.max(0, i - 1); a <= Math.min(gw - 1, i + 1); a++)
        for (const p of hash[b * gw + a]) if ((p[0] - x) ** 2 + (p[1] - y) ** 2 < d * d) return true;
    return false;
  };
  const inside = (x, y) => x > X0 + 4 && x < X0 + W - 4 && y > Y0 + 4 && y < Y0 + W - 4;
  const walk = (x0, y0, sgn) => {
    const pts = [];
    let x = x0, y = y0, closed = false;
    for (let s = 0; s < 1400; s++) {
      const d = dir(x, y);
      if (!d) break;
      const m = dir(x + sgn * d[0], y + sgn * d[1]);
      if (!m) break;
      x += 2 * sgn * m[0];
      y += 2 * sgn * m[1];
      if (!inside(x, y) || near(x, y, STOP)) break;
      pts.push([x, y]);
      if (s > 12 && Math.hypot(x - x0, y - y0) < 2.5) {
        closed = true;
        break;
      }
    }
    return [pts, closed];
  };
  const lines = [];
  const grow = (x, y, sep) => {
    if (!inside(x, y) || Math.hypot(x - CX, y - CY) < 34 || near(x, y, sep)) return;
    const [a, closed] = walk(x, y, 1);
    const b = closed ? [] : walk(x, y, -1)[0];
    const pts = [...b.reverse(), [x, y], ...a];
    if (pts.length < 22) return;
    pts.forEach((p) => {
      const [i, j] = slot(p[0], p[1]);
      hash[j * gw + i].push(p);
    });
    lines.push(pts);
  };
  [635, 659, 681, 701, 724, 749, 770, 796, 820, 843, 863, 884, 904].forEach((y) => grow(CX, y, STOP));
  angles.forEach((a) => [270, 292, 312].forEach((r) => grow(...rot(0, -r, a), STOP)));
  for (let q = 0; q < lines.length; q++) {
    const l = lines[q];
    for (let k = 1; k < l.length - 1; k += 4) {
      const dx = l[k + 1][0] - l[k - 1][0], dy = l[k + 1][1] - l[k - 1][1], m = Math.hypot(dx, dy) || 1;
      for (const s of [1, -1]) grow(l[k][0] - (s * dy * SEP * 1.02) / m, l[k][1] + (s * dx * SEP * 1.02) / m, SEP);
    }
  }
  return lines
    .map((l) => "M" + l.filter((_, i) => i % 2 === 0 || i === l.length - 1).map((p) => p[0].toFixed(1) + " " + p[1].toFixed(1)).join("L"))
    .join("");
}

const heads = [
  [1325, 372], [1246, 406], [1224, 426], [1187, 479], [1226, 475], [1251, 488], [1248, 545], [1108, 526], [1069, 548], [1081, 590], [1112, 444],
  [1351, 369], [1339, 388], [1437, 473], [1484, 470], [1370, 521], [1501, 524], [1416, 588], [1506, 576], [1533, 581],
  [1287, 633], [1356, 637], [1296, 681], [1251, 687], [1208, 679], [1394, 711], [1410, 669], [1296, 770], [1296, 796], [1109, 663], [1128, 703],
];

const ringSide =
  "M-38.700 -263.700Q-92.800 -264 -135.700 -240.300M-17.300 -243.700Q-78.700 -242.100 -121.300 -217.300M-38.700 -315.700H-17.300V-243.700M-38.700 -315.700V-263.700M-38.700 -304.700H-17.300M-38.700 -272.300H-17.300";
const armLines = [
  "M-10 -314.700V-24M10 -314.700V-24M-10 -255H10M-10 -140.700H10M-10 -123.700H10",
  "M-53.700 -289.700H70.300M-53.700 -300.700V-276.300M-50.700 -304V-273M55.300 -303.700V-273.700M67.300 -314.700V-262.700M70.300 -311.300V-266.300M55.300 -303.700H70.300M55.300 -296.700H70.300M55.300 -281.300H70.300M55.300 -273.700H70.300M37.500 -304.700V-272.300",
  "M-36.700 -160.700H44.300M-36.700 -174V-147M-34.300 -176V-145.300M-28.300 -169.700V-151.300M-36.700 -169.700H-28.300M-36.700 -165.700H-28.300M-36.700 -156.300H-28.300M-36.700 -151.300H-28.300M-18.300 -176V-145.300M42 -169.700V-151.300M44.300 -168V-153.700",
  "M19.300 -184.700H33L35.300 -181V-140L33 -136.700H19.300ZM19.300 -173.700H35.300M19.300 -148.700H35.300",
  "M-10 -22L0 -11.300L10 -22",
].join("");

const stops = [
  ["0", "#440154"], [".1", "#482475"], [".2", "#414487"], [".3", "#355f8d"], [".4", "#2a788e"],
  [".5", "#21918c"], [".6", "#22a884"], [".7", "#44bf70"], [".8", "#7ad151"], [".9", "#bddf26"], ["1", "#fde725"],
];
const ticks = [["1.2", 375], ["1", 465], ["0.8", 555], ["0.6", 645], ["0.4", 735], ["0.2", 825], ["0", 915]];

function Plot() {
  const d = useMemo(streamlines, []);
  return (
    <svg viewBox="901 204 807 766" className="h-[766px] w-[807px]" fontFamily="DejaVu Sans" fontSize="12">
      <defs>
        <radialGradient id="gc" gradientUnits="userSpaceOnUse" cx={CX} cy={CY} r="320">
          <stop offset="0" stopColor="#2b768e" />
          <stop offset=".09" stopColor="#2c738e" />
          <stop offset=".15" stopColor="#355f8d" />
          <stop offset=".25" stopColor="#3f4a89" />
          <stop offset=".4" stopColor="#473080" stopOpacity=".95" />
          <stop offset=".6" stopColor="#4a2377" stopOpacity=".7" />
          <stop offset=".82" stopColor="#4b1069" stopOpacity=".32" />
          <stop offset="1" stopColor="#4b005c" stopOpacity="0" />
        </radialGradient>
        <radialGradient id="gt">
          <stop offset="0" stopColor="#2b908c" stopOpacity=".85" />
          <stop offset=".22" stopColor="#31688e" stopOpacity=".7" />
          <stop offset=".5" stopColor="#3f4a89" stopOpacity=".42" />
          <stop offset="1" stopColor="#481f70" stopOpacity="0" />
        </radialGradient>
        <radialGradient id="gr">
          <stop offset="0" stopColor="#22a884" stopOpacity=".95" />
          <stop offset=".45" stopColor="#238a8d" stopOpacity=".6" />
          <stop offset="1" stopColor="#31688e" stopOpacity="0" />
        </radialGradient>
        <linearGradient id="cap" x1="0" y1="0" x2="0" y2="1">
          <stop offset="0" stopColor="#52c569" />
          <stop offset=".3" stopColor="#22a884" />
          <stop offset="1" stopColor="#23888e" stopOpacity="0" />
        </linearGradient>
        <linearGradient id="bar" x1="0" y1="1" x2="0" y2="0">
          {stops.map(([o, c]) => <stop key={o} offset={o} stopColor={c} />)}
        </linearGradient>
        <filter id="bl" x="-200%" width="500%" y="-20%" height="140%"><feGaussianBlur stdDeviation="9" /></filter>
        <clipPath id="box"><rect x={X0} y={Y0} width={W} height={W} /></clipPath>
      </defs>
      <rect x="949.500" y="232.500" width="710" height="709.500" fill="none" stroke="#000" shapeRendering="crispEdges" />
      <path d="M950 233l30 30M1659 233l-30 30M950 942l30-30M1659 942l-30-30" stroke="#000" />
      <g clipPath="url(#box)">
        <rect x={X0} y={Y0} width={W} height={W} fill="#4b005c" />
        <rect x={X0} y={Y0} width={W} height={W} fill="url(#gc)" />
        {angles.map((a) => (
          <g key={a} transform={`translate(${CX} ${CY}) rotate(${a})`}>
            <rect x="-13" y="-245" width="26" height="215" fill="#3c5a8c" opacity=".4" filter="url(#bl)" />
            <ellipse cy="-240" rx="48" ry="62" fill="url(#gt)" />
            <rect x="-10" y="-255" width="20" height="26" fill="url(#cap)" />
            <ellipse cy="-34" rx="20" ry="34" fill="url(#gr)" />
          </g>
        ))}
        <circle cx={CX} cy={CY} r="24" fill="#4b005c" />
        <path d={d} stroke="#fff" strokeOpacity=".48" fill="none" />
        {heads.map(([x, y]) => <circle key={x + "," + y} cx={x} cy={y} r="1.700" fill="#fff" opacity=".5" />)}
        {angles.map((a) => (
          <g key={a} transform={`translate(${CX} ${CY}) rotate(${a})`} fill="none" stroke="#000">
            <rect x="-12" y="-30" width="24" height="8" rx="3" fill="#35b779" />
            <path d="M-10 -23.500H10" stroke="#e5e419" strokeWidth="1.500" />
            <path d={ringSide} />
            <path d={ringSide} transform="scale(-1 1)" />
            <path d={armLines} />
            <path d="M-17.500 -170V-152M19.500 -174V-147M35 -173V-149" strokeWidth="2" />
            <circle cx="-153.700" cy="-212.700" r="26" />
            <path d="M-121.300 -217.300A32.500 32.500 0 0 1 -167.300 -183.700M-184.700 -204.700A32.500 32.500 0 0 1 -135.700 -240.300" />
          </g>
        ))}
        <circle cx={CX} cy={CY} r="31" fill="none" stroke="#000" />
      </g>
      <rect x="1615.500" y="286.500" width="14" height="629" fill="url(#bar)" stroke="#2a2a35" />
      {ticks.map(([t, y]) => (
        <g key={t}>
          {t !== "0" && <path d={`M1615 ${y + 0.5}h3M1627 ${y + 0.5}h3`} stroke="#123" />}
          <text x={t === "0" ? 1639 : 1638} y={y + 4.5} textLength={t.length > 1 ? 19 : 7} fill="#111">{t}</text>
        </g>
      ))}
      <path d="M1602 259h11l-5.500-10zM1602 929h11l-5.500 10z" fill="#000" />
      <text x="1618" y="260" textLength="19" fill="#111">1.4</text>
      <text x="1618" y="938" fill="#111">0</text>
      <path d="M945 925V905" stroke="#5aa63f" strokeWidth="2" />
      <path d="M942 906h6l-3-10z" fill="#5aa63f" />
      <path d="M948 926h18" stroke="#d81b60" strokeWidth="2" />
      <path d="M965 923v6l9-3z" fill="#d81b60" />
      <rect x="942" y="923" width="6" height="6" fill="#4a78b5" />
      <text x="942" y="890" fill="#222">y</text>
      <text x="980" y="929" fill="#222">x</text>
    </svg>
  );
}

const axesIcon = (t) => (
  <Svg key={t}>
    <path d="M2 14V2M.500 4L2 1l1.500 3" stroke={t === "xz" || t === "yz" ? "#3787c8" : "#5aa63f"} />
    <path d="M2 14h12M12 12.500l3 1.500-3 1.500" stroke={t === "yz" ? "#5aa63f" : "#d8235a"} strokeWidth="1.200" />
    <text x="4.500" y="9.500" fontSize="10" fill="#808285" fontFamily="Noto Sans">{t}</text>
  </Svg>
);
const C = ({ c, children }) => <div className={"flex h-5 shrink-0 items-center justify-center " + c}>{children}</div>;
const on = " rounded-[2px] border border-[#1e90f0] bg-[#9ecffa] ";
const TSep = () => <div className="h-[15px] w-px shrink-0 bg-[#cfd1d4]" />;
const Mag = ({ sign }) => (
  <Svg><circle cx="7" cy="6" r="5" stroke={B} strokeWidth="1.500" /><path d="M10.500 10L15 15" stroke={B} strokeWidth="2.200" /><path d={sign} stroke={B} strokeWidth="1.300" /></Svg>
);

function Graphics() {
  return (
    <div className="flex h-[822px] flex-col overflow-hidden border border-[#d2d3d6] bg-gradient-to-b from-[#fafbff] from-10% to-[#e4f0fe]">
      <div className="flex h-[31px] items-center pl-[7px] pt-[5px] font-['Open_Sans'] text-[21px] font-light text-[#2b579a]">
        <T w={75}>Graphics</T>
        <div className="mb-[2px] ml-auto mr-[3px] flex items-center gap-[7px]"><Caret className="fill-[#4a4a4c]" s="w-[8px] h-[4px]" /><Pin /></div>
      </div>
      <div className="mb-[2px] flex h-[21px] items-center pl-[2px]">
        <C c="w-[23px]"><Mag sign="M4.500 6h5M7 3.500v5" /></C>
        <C c="w-[23px]"><Mag sign="M4.500 6h5" /></C>
        <C c="w-[22px]"><Svg><path d="M.500 6v9h9" stroke={B} strokeDasharray="2 1.500" /><circle cx="8.500" cy="6" r="4.800" stroke={B} strokeWidth="1.400" /><path d="M12 10l4 4.500" stroke={B} strokeWidth="2" /><path d="M6 6h5M8.500 3.500v5" stroke={B} /></Svg></C>
        <C c="w-[16px]"><Caret /></C>
        <C c="w-[29px]"><Svg><path d="M.700 .700h14.600v14.600H.700z" stroke="#707275" strokeWidth="1.200" /><path d="M8 2.500v11M2.500 8h11" stroke={B} strokeDasharray="4 3" /><path d="M6 4.500L8 2l2 2.500zM6 11.500L8 14l2-2.500zM4.500 6L2 8l2.500 2zM11.500 6L14 8l-2.500 2z" fill={B} /></Svg></C>
        <TSep />
        <C c="w-[32px]"><Svg><path d="M7 11V1M5 3.500L7 1l2 2.500" stroke="#3787c8" strokeWidth="1.200" /><path d="M7 13L0 9M1 13l-1-4h3" stroke="#5aa63f" strokeWidth="1.300" /><path d="M7 13l8-4M11 8l4 .800-1.500 3.200" stroke="#d8235a" strokeWidth="1.500" /></Svg></C>
        <C c="w-[4px]"><Caret /></C>
        <C c="w-[24px] ml-[10px]">{axesIcon("xy")}</C>
        <C c="w-[23px]">{axesIcon("yz")}</C>
        <C c="w-[23px]">{axesIcon("xz")}</C>
        <C c="w-[22px]"><Svg><path d="M1 2l5 1v10l-5 1zM11 3l4-1v12l-4-1z" fill={B} /><path d="M6 5h5v6H6z" fill="#7fb8e0" stroke={B} /></Svg></C>
        <C c="w-[4px]" /><TSep />
        <C c="w-[30px]"><Svg><path d="M12.500 6A5.500 5.500 0 108 14.500a5.500 5.500 0 005-3" stroke={B} strokeWidth="1.500" /><path d="M8 .500l5 3.500-5 3z" fill={B} /></Svg></C>
        <C c="w-[4px]"><Caret /></C><C c="w-[13px]" />
        <TSep />
        <C c="w-[29px]"><Svg><path d={wire} stroke="#707275" strokeWidth="1.100" /><path d="M8 3v12M2 6l12 5" stroke="#707275" /></Svg></C>
        <C c="w-[4px]"><Caret /></C>
        <C c="w-[42px]"><Svg><path d="M3 1l3 1v13l-3-2z" fill="#dcdcde" stroke="#707275" /><path d="M6 2l6 3v9l-6 1z" fill="#7fb8e0" stroke="#707275" /></Svg></C>
        <C c="mr-[13px] -ml-[7px] w-[6px]"><Caret /></C>
        <TSep />
        <div className={"ml-[6px] flex w-[37px] items-center" + on}><C c="w-[18px] h-[18px]! border-r border-[#1e90f0]"><Svg s="size-[15px]"><path d="M1 5h4l6-3v12l-6-3H1z" fill={B} stroke="#2a6ea6" strokeWidth=".7" /></Svg></C><C c="flex-1 h-[18px]!"><Caret /></C></div>
        <div className={"ml-[4px] flex w-[37px] items-center" + on}><C c="w-[18px] h-[18px]! border-r border-[#1e90f0]"><Svg s="size-[15px]"><path d={wire} stroke={B} /></Svg></C><C c="flex-1 h-[18px]!"><Caret /></C></div>
        <C c={"ml-[4px] w-[20px]" + on}><Svg><path d="M1 1h14v14H1z" stroke="#707275" /><path d="M8 11V3M6.500 5L8 3l1.500 2" stroke="#3787c8" /><path d="M8 12L3 8" stroke="#5aa63f" strokeWidth="1.500" /><path d="M8 12l5-4" stroke="#d8235a" strokeWidth="1.500" /></Svg></C>
        <C c="w-[26px]"><Svg><path d="M1 1h14v14H1zM3.500 3.500h9v9h-9zM3.500 6.500h9M3.500 9.500h9M6.500 3.500v9M9.500 3.500v9" stroke="#707275" /></Svg></C>
        <C c={"w-[20px]" + on}><Svg><path d="M1 1h14v14H1z" stroke="#707275" strokeWidth="1.200" fill="#b9dcfa" /><path d="M12 3v4" stroke="#f5c430" strokeWidth="2.500" /><path d="M12 7v6" stroke="#e8602c" strokeWidth="2.500" /></Svg></C>
        <C c="w-[26px]"><Svg><circle cx="8" cy="8" r="5.200" stroke={B} strokeWidth="3.800" strokeDasharray="4.200 1.245" /></Svg></C>
        <C c="w-[6px] ml-px"><Caret /></C>
        <C c="w-[22px] ml-[10px]"><Svg><path d="M.500 3.500H5L6 1.500h4l1 2h4.500v11H.500z" fill={B} /><circle cx="8" cy="8.500" r="3.300" stroke="#fff" strokeWidth="1.300" /></Svg></C>
        <C c="w-[24px]"><Svg><path d="M4 5V1h8v4M4 10h8v5.500H4z" stroke={B} strokeWidth="1.200" fill="#fff" /><path d="M1 5h14v6h-3v-1H4v1H1z" fill="#a9cfea" stroke={B} strokeWidth="1.200" /></Svg></C>
      </div>
      <div className="relative">
        <Plot />
        <div className="absolute right-[6px] top-[6px]"><Logo s="size-[19px]" /></div>
      </div>
    </div>
  );
}

const msgs = [
  ["COMSOL Multiphysics 6.1.0.282", 167],
  ["[Sep 26, 2025, 11:42 AM] Opened file: C:\\Users\\spiek\\Downloads\\simulation_mag_field_export_5N42_1x1x1_8.mph", 600],
  ["[Sep 26, 2025, 11:42 AM] Formed union of 51 solid objects.", 306],
  ["[Sep 26, 2025, 11:42 AM] Union has 91 domains, 1374 boundaries, 2832 edges, and 1598 vertices.", 502],
  ["[Sep 26, 2025, 11:42 AM] Union is disconnected and has 2 components.", 373],
  ["[Sep 26, 2025, 11:42 AM] Finalized geometry has 91 domains, 1114 boundaries, 2307 edges, and 1398 vertices.", 570],
  ["[Sep 26, 2025, 11:42 AM] Finalized geometry is disconnected and has 2 components.", 441],
];
const Xm = () => <svg viewBox="0 0 8 8" className="size-[9px]"><path d="M0 0l8 8M8 0L0 8" stroke="#c3cad6" /></svg>;

function Messages() {
  return (
    <div className="mt-[6px] flex flex-1 flex-col border border-[#d2d3d6]">
      <div className="mt-[5px] flex h-6 items-end">
        <div className="h-px w-[4px] bg-[#d2d3d6]" />
        <div className="flex h-6 w-[89px] items-center gap-[9px] border border-b-0 border-[#d2d3d6] pl-[4px] text-[13px] text-[#2b579a]"><T w={58}>Messages</T><span className="mb-1"><Xm /></span></div>
        <div className="flex h-6 flex-1 items-start gap-2 border-b border-[#d2d3d6] pl-2 text-[13px]">
          <div className="flex h-[22px] w-[60px] items-center justify-center bg-[#ebebeb]"><T w={52}>Progress</T></div>
          <div className="flex h-[22px] w-[30px] items-center justify-center bg-[#ebebeb]"><T w={22}>Log</T></div>
          <div className="flex h-[22px] w-[70px] items-center gap-2 bg-[#ebebeb] pl-[4px]"><T w={41}>Table 1</T><span className="mb-1"><Xm /></span></div>
          <div className="ml-auto mr-[3px] flex h-[26px] items-center gap-[7px]"><Caret className="fill-[#4a4a4c]" s="w-[8px] h-[4px]" /><Pin /></div>
        </div>
      </div>
      <div className="flex h-[27px] items-center gap-[3px] pl-[7px] pt-px">
        <Svg><path d="M4 0l3 7" stroke="#808285" strokeWidth="1.500" /><path d="M5 7l3-1 5 9-5 .500c-2-2-3-5-3-8.500z" fill="#f5b96a" stroke="#e39a3c" strokeWidth=".7" /></Svg>
        <C c={"w-[21px] ml-[1px]" + on}><Svg><path d="M1 1.500h12v10H1zM1 4h12" stroke={B} strokeWidth="1.200" /><path d="M5 6.500h10.500v8H5zM5 6.500l5 4 5.500-4" fill="#fff" stroke={B} /></Svg></C>
      </div>
      <div className="mx-[4px] mb-[3px] mt-0 flex-1 border border-[#d2d3d6] pl-[2px] text-[12px] leading-[15px]">
        {msgs.map(([t, w], i) => (
          <div key={i} className="h-[15px]"><T w={w}>{t}</T></div>
        ))}
      </div>
    </div>
  );
}

export default function App() {
  return (
    <div className="flex h-[1400px] w-[1720px] flex-col overflow-hidden bg-white font-['Noto_Sans','Open_Sans',sans-serif] text-[12px] leading-[16px] text-black">
      <TitleBar />
      <div className="mx-1 flex flex-1 flex-col bg-[#fafbff] pl-[7px] pr-[7px] pt-[3px]">
        <TabBar />
        <Ribbon />
        <div className="mt-[4px] flex h-[1215px] shrink-0 gap-[5px]">
          <ModelBuilder />
          <Settings />
          <div className="flex flex-1 flex-col">
            <Graphics />
            <Messages />
          </div>
        </div>
        <div className="flex h-9 items-center pl-[1022px] pt-[4px]"><T w={93}>7.56 GB | 11.87 GB</T></div>
      </div>
    </div>
  );
}
